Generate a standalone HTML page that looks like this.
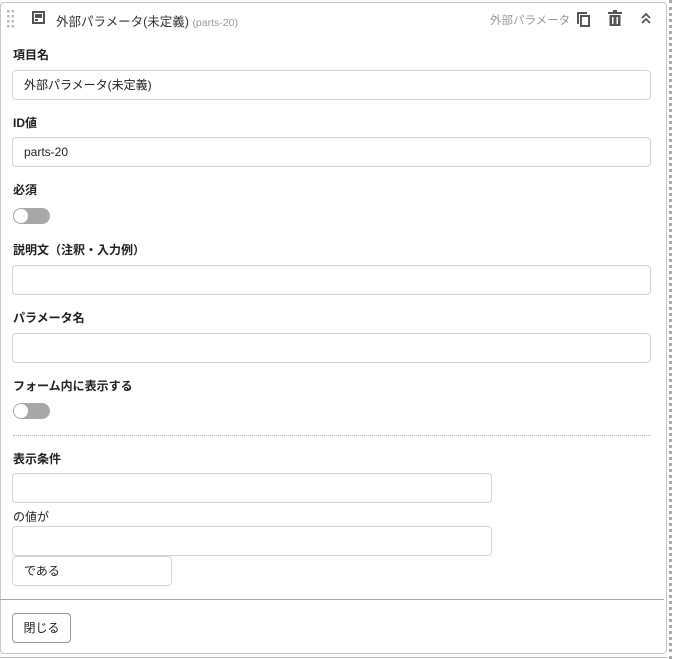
<!DOCTYPE html>
<html><head><meta charset="utf-8"><style>
*{box-sizing:border-box;margin:0;padding:0}
body{width:673px;height:659px;background:#fff;font-family:"Liberation Sans","Noto Sans CJK JP",sans-serif;color:#222;position:relative;overflow:hidden}
.a{position:absolute}
.card{left:0;top:2px;width:667px;height:652px;border:1px solid #c8c8c8;border-radius:4px}
.dash{left:669px;top:0;width:3px;height:659px;border-right:3px dotted #aaa}
.lbl{position:absolute;left:13px;font-size:12px;font-weight:bold;color:#222}
.inp{position:absolute;left:12px;border:1px solid #d4d4d4;border-radius:4px;height:30px;font-size:12px;line-height:28px;padding-left:11px;color:#222}
.tog{position:absolute;left:13px;width:37px;height:16px;border-radius:8px;background:#a8a8a8}
.tog::after{content:"";position:absolute;left:1px;top:1px;width:14px;height:14px;border-radius:50%;background:#fff}
</style></head><body>
<div class="a dash"></div>
<div class="a card"></div>
<svg class="a" style="left:7px;top:10px" width="8" height="18"><g fill="#bbb"><rect x="0" y="0" width="2.5" height="2.5"/><rect x="4.5" y="0" width="2.5" height="2.5"/><rect x="0" y="5" width="2.5" height="2.5"/><rect x="4.5" y="5" width="2.5" height="2.5"/><rect x="0" y="10" width="2.5" height="2.5"/><rect x="4.5" y="10" width="2.5" height="2.5"/><rect x="0" y="15" width="2.5" height="2.5"/><rect x="4.5" y="15" width="2.5" height="2.5"/></g></svg>
<svg class="a" style="left:32px;top:11px" width="13" height="13"><rect x="1" y="1" width="11" height="11" fill="none" stroke="#555" stroke-width="2"/><rect x="3" y="3" width="7" height="4" fill="#555"/><rect x="3" y="8" width="3" height="2" fill="#555"/></svg>
<div class="a" style="left:56px;top:11px;font-size:12.5px;color:#333">外部パラメータ(未定義) <span style="font-size:10.5px;color:#999">(parts-20)</span></div>
<div class="a" style="left:490px;top:12px;font-size:11.5px;color:#999">外部パラメータ</div>
<svg class="a" style="left:576px;top:11px" width="15" height="16"><path d="M2 13V2h9" fill="none" stroke="#555" stroke-width="2"/><rect x="5" y="5" width="8" height="10" fill="none" stroke="#555" stroke-width="2"/></svg>
<svg class="a" style="left:608px;top:10px" width="14" height="16"><rect x="0" y="2" width="14" height="2" fill="#555"/><rect x="5" y="0" width="4" height="2" fill="#555"/><rect x="1.5" y="5" width="11" height="11" fill="#555"/><rect x="4" y="7" width="1.5" height="7" fill="#fff"/><rect x="8.5" y="7" width="1.5" height="7" fill="#fff"/></svg>
<svg class="a" style="left:641px;top:13px" width="10" height="11"><path d="M1 5l4-4 4 4M1 10l4-4 4 4" fill="none" stroke="#555" stroke-width="1.8"/></svg>

<div class="lbl" style="top:46px">項目名</div>
<div class="inp" style="top:70px;width:639px">外部パラメータ(未定義)</div>
<div class="lbl" style="top:114px">ID値</div>
<div class="inp" style="top:137px;width:639px">parts-20</div>
<div class="lbl" style="top:181px">必須</div>
<div class="tog" style="top:208px"></div>
<div class="lbl" style="top:241px">説明文（注釈・入力例）</div>
<div class="inp" style="top:265px;width:639px"></div>
<div class="lbl" style="top:309px">パラメータ名</div>
<div class="inp" style="top:333px;width:639px"></div>
<div class="lbl" style="top:377px">フォーム内に表示する</div>
<div class="tog" style="top:403px"></div>
<div class="a" style="left:13px;top:435px;width:638px;border-top:1px dotted #bbb"></div>
<div class="lbl" style="top:450px">表示条件</div>
<div class="inp" style="top:473px;width:480px"></div>
<div class="a" style="left:13px;top:508px;font-size:12px">の値が</div>
<div class="inp" style="top:526px;width:480px"></div>
<div class="inp" style="top:556px;width:160px">である</div>
<div class="a" style="left:0;top:599px;width:664px;border-top:1px solid #aaa"></div>
<div class="a" style="left:12px;top:613px;width:59px;height:30px;border:1px solid #999;border-radius:4px;font-size:12px;line-height:28px;text-align:center">閉じる</div>
<div class="a" style="left:0;top:657px;width:667px;border-top:1px solid #bbb"></div>
</body></html>
